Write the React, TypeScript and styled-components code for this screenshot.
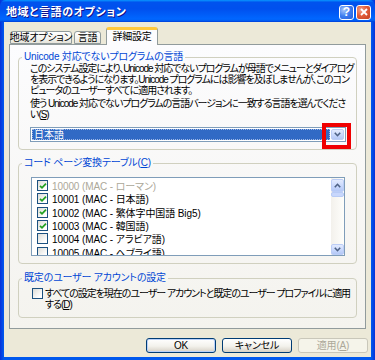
import React from "react";
import styled, { createGlobalStyle } from "styled-components";

const FONT = `"Liberation Sans", "Noto Sans CJK JP", sans-serif`;

const GlobalStyle = createGlobalStyle`
  html, body {
    margin: 0;
    padding: 0;
    background: #ffffff;
  }
  body {
    font-family: ${FONT};
  }
`;

const Frame = styled.div`
  width: 375px;
  height: 360px;
  box-sizing: border-box;
  display: flex;
  flex-direction: column;
  background: linear-gradient(to right, #0831d9, #0058ee 1%, #0058ee 99%, #0831d9);
  font-family: ${FONT};
  font-size: 10px;
  font-feature-settings: "palt";
  color: #000;
  overflow: hidden;
`;

const TitleBar = styled.div`
  height: 22px;
  flex: none;
  display: flex;
  align-items: center;
  padding: 0 4px 0 6px;
  background: linear-gradient(
    to bottom,
    #0997ff 0%,
    #0053ee 10%,
    #0050ee 40%,
    #0066ff 85%,
    #0062f8 92%,
    #003dd7 100%
  );
  border-radius: 6px 6px 0 0;
`;

const Title = styled.div`
  flex: 1;
  color: #ffffff;
  font-weight: bold;
  font-size: 11px;
  letter-spacing: 0.6px;
  text-shadow: 1px 1px #0f1089;
  white-space: nowrap;
`;

const CaptionButton = styled.div<{ $close?: boolean }>`
  width: 15px;
  height: 15px;
  box-sizing: border-box;
  margin-left: 2px;
  margin-top: 2px;
  border: 1px solid #ffffff;
  border-radius: 3px;
  display: flex;
  align-items: center;
  justify-content: center;
  color: #ffffff;
  font-weight: bold;
  font-size: 12px;
  line-height: 1;
  background: ${(p) =>
    p.$close
      ? "radial-gradient(circle at 30% 30%, #f0a08a, #e25d3b 45%, #c4401d)"
      : "radial-gradient(circle at 30% 30%, #a8c6fa, #3a7bf0 50%, #2a5fd8)"};
`;

const Client = styled.div`
  flex: 1;
  margin: 0 4px 3px 4px;
  background: #ece9d8;
  padding: 5px 5px 0 5px;
  display: flex;
  flex-direction: column;
`;

const TabStrip = styled.div`
  height: 18px;
  margin-bottom: -1px;
  padding-left: 1px;
  display: flex;
  align-items: flex-end;
  position: relative;
  z-index: 2;
`;

const Tab = styled.div<{ $active?: boolean; $w: number }>`
  box-sizing: border-box;
  width: ${(p) => p.$w}px;
  height: ${(p) => (p.$active ? 18 : 13)}px;
  margin-bottom: ${(p) => (p.$active ? 0 : 1)}px;
  margin-right: ${(p) => (p.$active ? 0 : 2)}px;
  margin-left: ${(p) => (p.$active ? 3 : 0)}px;
  border: 1px solid #919b9c;
  border-bottom: ${(p) => (p.$active ? "none" : "1px solid #919b9c")};
  border-top: ${(p) => (p.$active ? "3px solid #ffc83c" : "1px solid #919b9c")};
  border-radius: 3px 3px 0 0;
  background: ${(p) =>
    p.$active ? "#fcfcfe" : "linear-gradient(to bottom, #ffffff, #f3f3ef 60%, #e6e4da)"};
  display: flex;
  align-items: center;
  justify-content: center;
  white-space: nowrap;
  line-height: 11px;
  letter-spacing: -0.2px;
  padding-bottom: ${(p) => (p.$active ? 2 : 0)}px;
`;

const Panel = styled.div`
  height: 285px;
  box-sizing: border-box;
  border: 1px solid #919b9c;
  background: linear-gradient(to bottom, #fcfcfe, #f4f3ee);
  padding: 6px 8px 0 8px;
  display: flex;
  flex-direction: column;
`;

const Group = styled.fieldset<{ $h: number; $gap?: number }>`
  box-sizing: border-box;
  height: ${(p) => p.$h}px;
  margin: ${(p) => p.$gap ?? 0}px 0 0 0;
  padding: 0;
  border: 1px solid #d0d0bf;
  border-radius: 4px;
  min-width: 0;
`;

const Legend = styled.legend`
  margin-left: 3px;
  padding: 0 2px;
  color: #0046d5;
  line-height: 12px;
  white-space: nowrap;
  letter-spacing: -0.2px;
`;

const GroupBody = styled.div<{ $pad: string }>`
  padding: ${(p) => p.$pad};
`;

const Para = styled.div<{ $gap?: number }>`
  line-height: 11px;
  white-space: nowrap;
  letter-spacing: -1.05px;
  margin-top: ${(p) => p.$gap ?? 0}px;
`;

const Combo = styled.div`
  position: relative;
  margin-top: 7px;
  width: 316px;
  height: 15px;
  box-sizing: border-box;
  border: 1px solid #7f9db9;
  background: #ffffff;
  padding: 1px;
  display: flex;
  gap: 1px;
`;

const ComboValue = styled.div`
  flex: 1;
  background: #316ac5;
  color: #ffffff;
  outline: 1px dotted #9fb8e4;
  outline-offset: -1px;
  line-height: 11px;
  padding-left: 2px;
`;

const ArrowButton = styled.div<{ $h?: number }>`
  width: 13px;
  height: ${(p) => p.$h ?? 11}px;
  box-sizing: border-box;
  border: 1px solid #bccdf6;
  border-radius: 2px;
  background: linear-gradient(to bottom, #e3ebfe, #c6d6fc 60%, #b4c8f6);
  display: flex;
  align-items: center;
  justify-content: center;
  flex: none;
`;

const Highlight = styled.div`
  position: absolute;
  left: 291px;
  top: -5px;
  width: 29px;
  height: 26px;
  box-sizing: border-box;
  border: 4px solid #f00000;
`;

const ListBox = styled.div`
  width: 314px;
  height: 79px;
  box-sizing: border-box;
  border: 1px solid #7f9db9;
  background: #ffffff;
  display: flex;
  overflow: hidden;
`;

const Items = styled.div`
  flex: 1;
  padding: 1px 0 0 5px;
  overflow: hidden;
`;

const Item = styled.div<{ $dim?: boolean }>`
  height: 13.3px;
  display: flex;
  align-items: center;
  gap: 4px;
  white-space: nowrap;
  color: ${(p) => (p.$dim ? "#aca899" : "#000000")};
  letter-spacing: -0.1px;
`;

const Box = styled.span`
  width: 11px;
  height: 11px;
  box-sizing: border-box;
  flex: none;
  border: 1px solid #1c5180;
  background: linear-gradient(135deg, #dcdcd7, #ffffff 80%);
  display: inline-flex;
  align-items: center;
  justify-content: center;
`;

const ScrollBar = styled.div`
  width: 13px;
  flex: none;
  display: flex;
  flex-direction: column;
  background: linear-gradient(to right, #f3f1ec, #fefefb);
  padding-top: 1px;
`;

const Thumb = styled.div`
  height: 5px;
  box-sizing: border-box;
  border: 1px solid #b8cbf6;
  background: #c8d7fc;
  border-radius: 2px;
`;

const Track = styled.div`
  flex: 1;
`;

const CheckRow = styled.div`
  display: flex;
  gap: 2px;
  margin-top: 4px;
`;

const ButtonRow = styled.div`
  display: flex;
  justify-content: flex-end;
  gap: 6px;
  padding: 9px 0 0 0;
  margin-right: -2px;
`;

const Button = styled.button<{ $default?: boolean }>`
  width: 70px;
  height: 15px;
  box-sizing: border-box;
  padding: 0;
  border: 1px solid ${(p) => (p.disabled ? "#c9c7ba" : "#003c74")};
  border-radius: 3px;
  background: ${(p) =>
    p.disabled ? "#f5f4ea" : "linear-gradient(to bottom, #ffffff, #f3f2ec 55%, #d6d0c5)"};
  box-shadow: ${(p) => (p.$default ? "inset 0 0 0 1px #b9d1fa" : "none")};
  color: ${(p) => (p.disabled ? "#aca899" : "#000000")};
  font-family: ${FONT};
  font-size: 10px;
  font-feature-settings: "palt";
  line-height: 12px;
  letter-spacing: -0.2px;
`;

const Chevron = ({ up }: { up?: boolean }) => (
  <svg width="7" height="5" viewBox="0 0 7 5">
    <path
      d={up ? "M0.8 4.2 L3.5 1.3 L6.2 4.2" : "M0.8 0.8 L3.5 3.7 L6.2 0.8"}
      fill="none"
      stroke="#4d6185"
      strokeWidth="1.6"
    />
  </svg>
);

const Check = () => (
  <svg width="8" height="8" viewBox="0 0 8 8">
    <path d="M1 3.8 L3 5.8 L7 1.6" fill="none" stroke="#21a121" strokeWidth="1.8" />
  </svg>
);

const CheckBox = ({ checked }: { checked?: boolean }) => <Box>{checked && <Check />}</Box>;

const CloseGlyph = () => (
  <svg width="8" height="8" viewBox="0 0 8 8">
    <path d="M1 1 L7 7 M7 1 L1 7" stroke="#ffffff" strokeWidth="1.8" />
  </svg>
);

const codePages = [
  { label: "10000 (MAC - ローマン)", checked: true, dim: true },
  { label: "10001 (MAC - 日本語)", checked: true },
  { label: "10002 (MAC - 繁体字中国語 Big5)", checked: true },
  { label: "10003 (MAC - 韓国語)", checked: true },
  { label: "10004 (MAC - アラビア語)", checked: false },
  { label: "10005 (MAC - ヘブライ語)", checked: false },
];

export default function App() {
  return (
    <>
      <GlobalStyle />
      <Frame>
        <TitleBar>
          <Title>地域と言語のオプション</Title>
          <CaptionButton>?</CaptionButton>
          <CaptionButton $close>
            <CloseGlyph />
          </CaptionButton>
        </TitleBar>
        <Client>
          <TabStrip>
            <Tab $w={62}>地域オプション</Tab>
            <Tab $w={27}>言語</Tab>
            <Tab $w={52} $active>
              詳細設定
            </Tab>
          </TabStrip>
          <Panel>
            <Group $h={99}>
              <Legend>Unicode 対応でないプログラムの言語</Legend>
              <GroupBody $pad="0 0 0 11px">
                <Para>
                  このシステム設定により、Unicode 対応でないプログラムが母語でメニューとダイアログ
                  <br />
                  を表示できるようになります。Unicode プログラムには影響を及ぼしませんが、このコン
                  <br />
                  ピュータのユーザーすべてに適用されます。
                </Para>
                <Para $gap={2}>
                  使う Unicode 対応でないプログラムの言語バージョンに一致する言語を選んでくださ
                  <br />
                  い(<u>S</u>)
                </Para>
                <Combo>
                  <ComboValue>日本語</ComboValue>
                  <ArrowButton>
                    <Chevron />
                  </ArrowButton>
                  <Highlight />
                </Combo>
              </GroupBody>
            </Group>

            <Group $h={107} $gap={7}>
              <Legend>
                コード ページ変換テーブル(<u>C</u>)
              </Legend>
              <GroupBody $pad="8px 0 0 12px">
                <ListBox>
                  <Items>
                    {codePages.map((cp) => (
                      <Item key={cp.label} $dim={cp.dim}>
                        <CheckBox checked={cp.checked} />
                        {cp.label}
                      </Item>
                    ))}
                  </Items>
                  <ScrollBar>
                    <ArrowButton $h={13}>
                      <Chevron up />
                    </ArrowButton>
                    <Thumb />
                    <Track />
                    <ArrowButton $h={11}>
                      <Chevron />
                    </ArrowButton>
                  </ScrollBar>
                </ListBox>
              </GroupBody>
            </Group>

            <Group $h={46} $gap={8}>
              <Legend>既定のユーザー アカウントの設定</Legend>
              <GroupBody $pad="0 0 0 13px">
                <CheckRow>
                  <CheckBox />
                  <Para>
                    すべての設定を現在のユーザー アカウントと既定のユーザー プロファイルに適用
                    <br />
                    する(<u>D</u>)
                  </Para>
                </CheckRow>
              </GroupBody>
            </Group>
          </Panel>
          <ButtonRow>
            <Button $default>OK</Button>
            <Button>キャンセル</Button>
            <Button disabled>
              適用(<u>A</u>)
            </Button>
          </ButtonRow>
        </Client>
      </Frame>
    </>
  );
}
